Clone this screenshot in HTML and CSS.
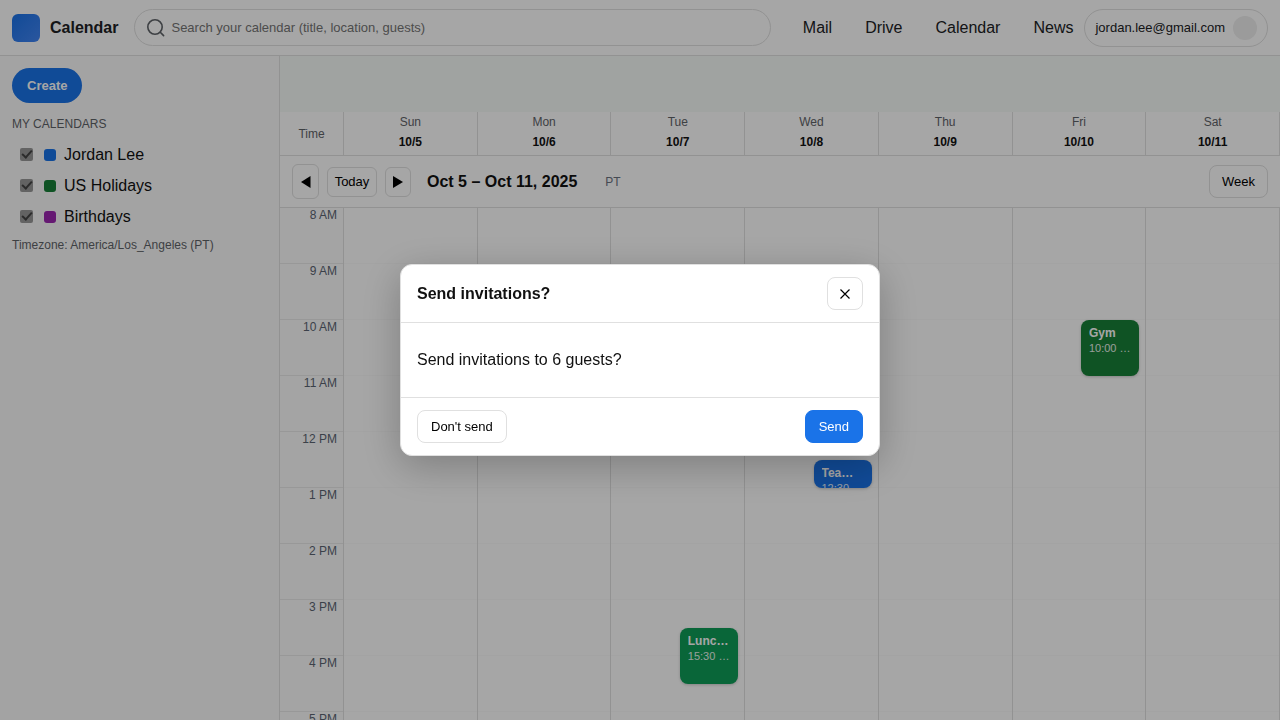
FILE: index.html
```html
<!DOCTYPE html>
<html lang="en">
<head>
<meta charset="utf-8">
<meta name="viewport" content="width=device-width, initial-scale=1">
<title>Calendar</title>
<link rel="stylesheet" href="styles.css">
</head>
<body>
<div class="app">
  <header class="topbar">
    <div class="brand"><span class="logo"></span><span>Calendar</span></div>
    <label class="search">
      <svg class="search-icon" viewBox="0 0 20 20" aria-hidden="true"><circle cx="9" cy="9" r="7.2"/><path d="M14.3 14.3L17.6 17.6"/></svg>
      <input type="text" aria-label="Search" placeholder="Search your calendar (title, location, guests)">
    </label>
    <nav class="links">
      <a href="#">Mail</a><a href="#">Drive</a><a href="#">Calendar</a><a href="#">News</a>
    </nav>
    <button class="account" type="button"><span>jordan.lee@gmail.com</span><span class="avatar"></span></button>
  </header>

  <aside class="sidebar">
    <button class="create" type="button">Create</button>
    <h2 class="side-title">MY CALENDARS</h2>
    <ul class="calendars">
      <li><label><input type="checkbox" checked disabled><span class="swatch blue"></span>Jordan Lee</label></li>
      <li><label><input type="checkbox" checked disabled><span class="swatch green"></span>US Holidays</label></li>
      <li><label><input type="checkbox" checked disabled><span class="swatch purple"></span>Birthdays</label></li>
    </ul>
    <p class="timezone">Timezone: America/Los_Angeles (PT)</p>
  </aside>

  <main class="main">
    <div class="band"></div>
    <div class="week-head">
      <div class="time-head">Time</div>
      <div class="day-head">Sun<strong>10/5</strong></div>
      <div class="day-head">Mon<strong>10/6</strong></div>
      <div class="day-head">Tue<strong>10/7</strong></div>
      <div class="day-head">Wed<strong>10/8</strong></div>
      <div class="day-head">Thu<strong>10/9</strong></div>
      <div class="day-head">Fri<strong>10/10</strong></div>
      <div class="day-head">Sat<strong>10/11</strong></div>
    </div>
    <div class="toolbar">
      <button class="btn prev" type="button" aria-label="Previous week"><svg viewBox="0 0 10 12" aria-hidden="true"><path d="M9.5 0V12L0 6Z"/></svg></button>
      <button class="btn small today" type="button">Today</button>
      <button class="btn small next" type="button" aria-label="Next week"><svg viewBox="0 0 10 12" aria-hidden="true"><path d="M0 0V12L10 6Z"/></svg></button>
      <h1 class="range">Oct 5 – Oct 11, 2025</h1>
      <span class="zone">PT</span>
      <button class="btn view" type="button">Week</button>
    </div>
    <div class="week">
      <div class="hours">
        <div>8 AM</div><div>9 AM</div><div>10 AM</div><div>11 AM</div><div>12 PM</div><div>1 PM</div><div>2 PM</div><div>3 PM</div><div>4 PM</div><div>5 PM</div>
      </div>
      <div class="day"></div>
      <div class="day"></div>
      <div class="day">
        <div class="event teal" style="--start:7.5;--length:1"><strong>Lunch with Sam</strong><span>15:30 – 16:30</span></div>
      </div>
      <div class="day">
        <div class="event blue" style="--start:4.5;--length:.5"><strong>Team Sync</strong><span>12:30 – 13:00</span></div>
      </div>
      <div class="day"></div>
      <div class="day">
        <div class="event green" style="--start:2;--length:1"><strong>Gym</strong><span>10:00 – 11:00</span></div>
      </div>
      <div class="day"></div>
    </div>
  </main>
</div>

<div class="overlay">
  <section class="modal" role="dialog" aria-modal="true" aria-labelledby="modal-title">
    <header class="modal-head">
      <h2 id="modal-title">Send invitations?</h2>
      <button class="btn close" type="button" aria-label="Close"><svg viewBox="0 0 10 10" aria-hidden="true"><path d="M.5 .5L9.5 9.5M9.5 .5L.5 9.5"/></svg></button>
    </header>
    <div class="modal-body"><p>Send invitations to 6 guests?</p></div>
    <footer class="modal-foot">
      <button class="btn" type="button">Don't send</button>
      <button class="btn primary" type="button">Send</button>
    </footer>
  </section>
</div>
</body>
</html>
```

FILE: styles.css
```css
*, *::after { box-sizing: border-box; }

body {
  margin: 0;
  font-family: "Liberation Sans", Arial, sans-serif;
  font-size: 16px;
  line-height: 18px;
  color: #111;
  background: #fff;
}

button, input { font: inherit; color: inherit; }
h1, h2, p, ul { margin: 0; padding: 0; }
ul { list-style: none; }

.app {
  display: grid;
  grid-template: 56px minmax(0, 1fr) / 280px minmax(0, 1fr);
  height: 100vh;
  overflow: hidden;
}

/* Top bar */
.topbar {
  grid-column: 1 / -1;
  display: flex;
  align-items: center;
  padding: 0 12px;
  border-bottom: 1px solid #e0e0e0;
  color: #202124;
}
.brand { display: flex; align-items: center; gap: 10px; font-weight: bold; }
.logo {
  width: 28px;
  height: 28px;
  border-radius: 6px;
  background: linear-gradient(135deg, #1a73e8, #4285f4);
}
.search {
  flex: 1;
  display: flex;
  align-items: center;
  gap: 5px;
  height: 37px;
  margin: 0 32px 0 16px;
  padding: 0 12px 0 11px;
  border: 1px solid #e0e0e0;
  border-radius: 20px;
}
.search-icon { width: 20px; height: 20px; fill: none; stroke: #5f6368; stroke-width: 1.6; stroke-linecap: round; }
.search input { flex: 1; min-width: 0; padding: 0; border: 0; outline: 0; background: none; font-size: 13px; }
.search input::placeholder { color: #757575; }
.links { display: flex; gap: 33px; margin-right: 11px; }
.links a { color: inherit; text-decoration: none; }
.account {
  display: flex;
  align-items: center;
  gap: 8px;
  height: 38px;
  padding: 0 10px;
  border: 1px solid #e0e0e0;
  border-radius: 20px;
  background: none;
  font-size: 13px;
}
.avatar { width: 24px; height: 24px; border-radius: 50%; background: #eee; }

/* Sidebar */
.sidebar { padding: 12px; border-right: 1px solid #e0e0e0; background: #fbfbfb; }
.create {
  display: block;
  height: 35px;
  padding: 0 15px;
  border: 0;
  border-radius: 18px;
  background: #1a73e8;
  color: #fff;
  font-size: 13px;
  font-weight: bold;
}
.side-title { margin: 12px 0 6px; font-size: 12px; font-weight: normal; color: #5f6368; }
.calendars label { display: flex; align-items: center; gap: 8px; height: 31px; padding: 0 8px; }
.calendars input {
  appearance: none;
  display: grid;
  justify-content: center;
  width: 13px;
  height: 13px;
  margin: 0 3px 0 0;
  border-radius: 2px;
  background: #999;
}
.calendars input:checked::after {
  content: "";
  width: 6px;
  height: 10px;
  border: solid #444;
  border-width: 0 2px 2px 0;
  transform: rotate(42deg);
}
.swatch { width: 12px; height: 12px; border-radius: 3px; }
.timezone { margin-top: 4px; font-size: 12px; color: #5f6368; }

.blue { background: #1a73e8; }
.green { background: #188038; }
.teal { background: #0f9d58; }
.purple { background: #9c27b0; }

/* Week view */
.main { display: flex; flex-direction: column; min-height: 0; }
.band { flex: none; height: 56px; background: #f6faf8; }
.week-head, .week { display: grid; grid-template-columns: 64px repeat(7, minmax(0, 1fr)); }
.week-head {
  flex: none;
  height: 44px;
  border-bottom: 1px solid #e0e0e0;
  font-size: 12px;
  line-height: 20px;
  color: #5f6368;
  text-align: center;
}
.week-head > div { border-right: 1px solid #e0e0e0; }
.time-head { padding-top: 12px; }
.day-head strong { display: block; color: #111; }

.toolbar {
  flex: none;
  display: flex;
  align-items: center;
  gap: 8px;
  height: 52px;
  padding: 0 12px;
  border-bottom: 1px solid #e0e0e0;
}
.btn {
  display: inline-flex;
  align-items: center;
  justify-content: center;
  height: 33px;
  padding: 0 12px;
  border: 1px solid #e0e0e0;
  border-radius: 8px;
  background: #fff;
  color: #000;
  font-size: 13px;
}
.modal-foot .btn { padding: 0 13px; }
.btn.small { height: 30px; padding: 0; border-radius: 6px; }
.btn.today { width: 50px; }
.btn.prev { width: 27px; height: 35px; padding: 0; border-radius: 6px; }
.btn.next { width: 26px; }
.prev svg, .next svg { width: 10px; height: 12px; }
.range { margin-left: 8px; font-size: 16px; }
.zone { margin-left: 20px; font-size: 12px; color: #6b7280; }
.view { margin-left: auto; }

.week { flex: 1; min-height: 0; overflow: hidden; }
.hours { background: #fcfcfc; border-right: 1px solid #e0e0e0; }
.hours div {
  height: 56px;
  padding-right: 6px;
  border-bottom: 1px solid #eaeaea;
  font-size: 12px;
  line-height: 14px;
  text-align: right;
  color: #5b6472;
}
.day {
  position: relative;
  border-right: 1px solid #e0e0e0;
  background: repeating-linear-gradient(#fff 0 55px, #fafafa 55px 56px);
}
.event {
  position: absolute;
  top: calc(var(--start) * 56px);
  right: 6px;
  width: calc(50% - 8px);
  height: calc(var(--length) * 56px);
  padding: 6px 8px;
  border-radius: 8px;
  box-shadow: 0 1px 3px rgba(0, 0, 0, .2);
  overflow: hidden;
  color: #fff;
  font-size: 12px;
  line-height: 14px;
}
.event strong, .event span { display: block; overflow: hidden; white-space: nowrap; text-overflow: ellipsis; }
.event span { margin-top: 2px; font-size: 11px; line-height: 13px; opacity: .9; }

/* Dialog */
.overlay {
  position: fixed;
  inset: 0;
  display: flex;
  align-items: center;
  justify-content: center;
  background: rgba(0, 0, 0, .35);
}
.modal {
  width: 480px;
  max-width: 100%;
  border: 1px solid #e0e0e0;
  border-radius: 12px;
  background: #fff;
  box-shadow: 0 10px 40px rgba(0, 0, 0, .25);
}
.modal-head, .modal-foot { display: flex; align-items: center; justify-content: space-between; padding: 12px 16px; }
.modal-head { border-bottom: 1px solid #e0e0e0; }
.modal-head h2 { font-size: 16px; }
.close svg { width: 10px; height: 10px; fill: none; stroke: #000; stroke-width: 1.2; }
.modal-body { padding: 28px 16px; }
.modal-foot { border-top: 1px solid #e0e0e0; }
.btn.primary { border-color: #1a73e8; background: #1a73e8; color: #fff; }
```
